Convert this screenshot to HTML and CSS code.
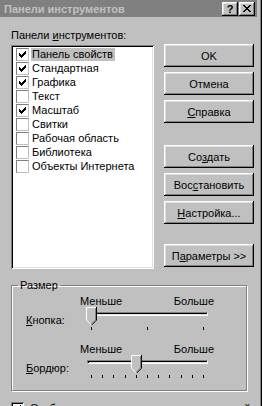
FILE: index.html
```html
<!DOCTYPE html>
<html lang="ru">
<head>
    <meta charset="UTF-8">
    <title>Панели инструментов</title>
    <link rel="stylesheet" href="styles.css">
</head>
<body>
    <div class="window">
        <div class="titlebar">
            <span class="title">Панели инструментов</span>
            <span class="cap-btn help">?</span>
            <span class="cap-btn close">
                <svg width="8" height="7" viewBox="0 0 8 7"><path d="M0 0h2v1h-2zM6 0h2v1h-2zM1 1h2v1h-2zM5 1h2v1h-2zM2 2h4v1h-4zM3 3h2v1h-2zM2 4h4v1h-4zM1 5h2v1h-2zM5 5h2v1h-2zM0 6h2v1h-2zM6 6h2v1h-2z" fill="#000"/></svg>
            </span>
        </div>
        <div class="dialog">
            <div class="main">
                <div class="left">
                    <div class="caption">Панели <u>и</u>нструментов:</div>
                    <div class="listbox">
                        <div class="item"><span class="cb checked"></span><span class="text selected">Панель свойств</span></div>
                        <div class="item"><span class="cb checked"></span><span class="text">Стандартная</span></div>
                        <div class="item"><span class="cb checked"></span><span class="text">Графика</span></div>
                        <div class="item"><span class="cb"></span><span class="text">Текст</span></div>
                        <div class="item"><span class="cb checked"></span><span class="text">Масштаб</span></div>
                        <div class="item"><span class="cb"></span><span class="text">Свитки</span></div>
                        <div class="item"><span class="cb"></span><span class="text">Рабочая область</span></div>
                        <div class="item"><span class="cb"></span><span class="text">Библиотека</span></div>
                        <div class="item"><span class="cb"></span><span class="text">Объекты Интернета</span></div>
                    </div>
                </div>
                <div class="buttons">
                    <div class="btn-group">
                        <button class="btn">OK</button>
                        <button class="btn">Отмена</button>
                        <button class="btn"><u>С</u>правка</button>
                    </div>
                    <div class="btn-group">
                        <button class="btn">Со<u>з</u>дать</button>
                        <button class="btn">Вос<u>с</u>тановить</button>
                        <button class="btn"><u>Н</u>астройка...</button>
                    </div>
                    <button class="btn">П<u>а</u>раметры &gt;&gt;</button>
                </div>
            </div>
            <fieldset class="group">
                <legend>Размер</legend>
                <div class="group-body">
                    <div class="scale">
                        <span>Меньше</span><span>Больше</span>
                    </div>
                    <div class="slider-row">
                        <span class="slider-label"><u>К</u>нопка:</span>
                        <div class="slider">
                            <div class="track"></div>
                            <span class="tick" style="left: 11px"></span>
                            <span class="tick" style="left: 67px"></span>
                            <span class="tick" style="left: 123px"></span>
                            <svg class="thumb" style="left: 6px" width="11" height="18" viewBox="0 0 11 18"><path d="M0 0H11V13L5.5 18.5L0 13Z" fill="#c0c0c0"/><path d="M0.5 13V0.5H10" stroke="#fff" fill="none"/><path d="M10.5 0V13.2L5.5 18.2" stroke="#000" fill="none"/><path d="M9.5 1V12.8L5.5 16.8" stroke="#808080" fill="none"/><path d="M0.5 13.2L5 17.7" stroke="#fff" fill="none"/></svg>
                        </div>
                    </div>
                    <div class="scale second">
                        <span>Меньше</span><span>Больше</span>
                    </div>
                    <div class="slider-row">
                        <span class="slider-label"><u>Б</u>ордюр:</span>
                        <div class="slider">
                            <div class="track"></div>
                            <span class="tick" style="left: 11px"></span>
                            <span class="tick" style="left: 22px"></span>
                            <span class="tick" style="left: 33px"></span>
                            <span class="tick" style="left: 45px"></span>
                            <span class="tick" style="left: 56px"></span>
                            <span class="tick" style="left: 67px"></span>
                            <span class="tick" style="left: 78px"></span>
                            <span class="tick" style="left: 89px"></span>
                            <span class="tick" style="left: 101px"></span>
                            <span class="tick" style="left: 112px"></span>
                            <span class="tick" style="left: 123px"></span>
                            <svg class="thumb" style="left: 51px" width="11" height="18" viewBox="0 0 11 18"><path d="M0 0H11V13L5.5 18.5L0 13Z" fill="#c0c0c0"/><path d="M0.5 13V0.5H10" stroke="#fff" fill="none"/><path d="M10.5 0V13.2L5.5 18.2" stroke="#000" fill="none"/><path d="M9.5 1V12.8L5.5 16.8" stroke="#808080" fill="none"/><path d="M0.5 13.2L5 17.7" stroke="#fff" fill="none"/></svg>
                        </div>
                    </div>
                </div>
            </fieldset>
            <div class="bottom-check">
                <span class="cb big checked"></span>
                <span>Отображать подсказки для кнопок панелей</span>
            </div>
        </div>
    </div>
</body>
</html>
```

FILE: styles.css
```css
* {
    box-sizing: border-box;
}
body {
    margin: 0;
    padding: 0;
    background-color: #fff;
    font-family: "Liberation Sans", Arial, sans-serif;
    font-size: 11px;
    line-height: 13px;
    color: #000;
}
.window {
    width: 263px;
    height: 406px;
    overflow: hidden;
    background-color: #c0c0c0;
    border-right: 1px solid #fff;
    box-shadow: inset -1px 0 #000, inset -2px 0 #808080;
}
.titlebar {
    display: flex;
    align-items: center;
    height: 17px;
    margin-right: 5px;
    padding: 0 2px 0 4px;
    background-color: #808080;
}
.title {
    flex: 1;
    padding-top: 1px;
    color: #c0c0c0;
    font-weight: bold;
}
.cap-btn {
    display: flex;
    justify-content: center;
    align-items: center;
    width: 16px;
    height: 14px;
    background-color: #c0c0c0;
    box-shadow: inset -1px -1px #000, inset 1px 1px #fff, inset -2px -2px #808080, inset 2px 2px #dfdfdf;
    font-weight: bold;
    font-size: 11px;
}
.cap-btn.help {
    margin-right: 1px;
    padding-top: 1px;
}
.dialog {
    padding: 12px 0 0 11px;
}
.main {
    display: flex;
}
.left {
    width: 143px;
}
.caption {
    height: 13px;
    margin-bottom: 3px;
}
.listbox {
    height: 224px;
    padding: 2px 0 0 5px;
    background-color: #fff;
    box-shadow: inset 1px 1px #808080, inset -1px -1px #fff, inset 2px 2px #000, inset -2px -2px #dfdfdf;
}
.item {
    display: flex;
    align-items: center;
    height: 14px;
}
.cb {
    width: 13px;
    height: 13px;
    margin-right: 2px;
    background-color: #fff;
    border: 1px solid #808080;
    border-right-color: #c0c0c0;
    border-bottom-color: #c0c0c0;
}
.cb.checked {
    background: #fff url("data:image/svg+xml,%3Csvg xmlns='http://www.w3.org/2000/svg' width='7' height='7'%3E%3Cpath d='M6 0h1v1h-1zM5 1h2v1h-2zM0 2h1v1h-1zM4 2h3v1h-3zM0 3h2v1h-2zM3 3h3v1h-3zM0 4h5v1h-5zM1 5h3v1h-3zM2 6h1v1h-1z'/%3E%3C/svg%3E") no-repeat 2px 2px;
}
.text {
    padding: 0 2px 0 1px;
}
.text.selected {
    background-color: #c0c0c0;
}
.buttons {
    display: flex;
    flex-direction: column;
    margin-left: 10px;
    padding-top: 15px;
}
.btn-group {
    display: flex;
    flex-direction: column;
    gap: 5px;
    margin-bottom: 22px;
}
.btn-group + .btn-group {
    margin-bottom: 20px;
}
.btn {
    width: 90px;
    height: 23px;
    padding: 0;
    border: none;
    background-color: #c0c0c0;
    box-shadow: inset -1px -1px #000, inset 1px 1px #fff, inset -2px -2px #808080, inset 2px 2px #dfdfdf;
    font-family: "Liberation Sans", Arial, sans-serif;
    font-size: 11px;
    color: #000;
}
.group {
    width: 236px;
    height: 112px;
    margin: 10px 0 0 0;
    padding: 0;
    border: 1px solid #808080;
    box-shadow: inset 1px 1px #fff, 1px 1px #fff;
}
.group legend {
    margin-left: 6px;
    padding: 0 2px;
}
.group-body {
    padding: 3px 0 0 14px;
}
.scale {
    display: flex;
    justify-content: space-between;
    width: 134px;
    height: 12px;
    margin-left: 54px;
}
.scale.second {
    margin-top: 12px;
}
.slider-row {
    display: flex;
}
.slider-label {
    width: 54px;
    padding-top: 7px;
}
.slider {
    position: relative;
    width: 134px;
    height: 24px;
}
.track {
    position: absolute;
    top: 5px;
    left: 7px;
    width: 121px;
    height: 4px;
    border-top: 1px solid #808080;
    border-left: 1px solid #808080;
    border-bottom: 1px solid #fff;
    border-right: 1px solid #fff;
    background-color: #dfdfdf;
    box-shadow: inset 1px 1px #000;
}
.tick {
    position: absolute;
    top: 20px;
    width: 1px;
    height: 3px;
    background-color: #000;
}
.thumb {
    position: absolute;
    top: 0;
}
.bottom-check {
    display: flex;
    align-items: center;
    gap: 6px;
    margin-top: 11px;
    white-space: nowrap;
}
.cb.big {
    flex-shrink: 0;
    margin-right: 0;
    border: none;
    box-shadow: inset 1px 1px #808080, inset -1px -1px #fff, inset 2px 2px #000, inset -2px -2px #dfdfdf;
    background-position: 3px 3px;
}
```
